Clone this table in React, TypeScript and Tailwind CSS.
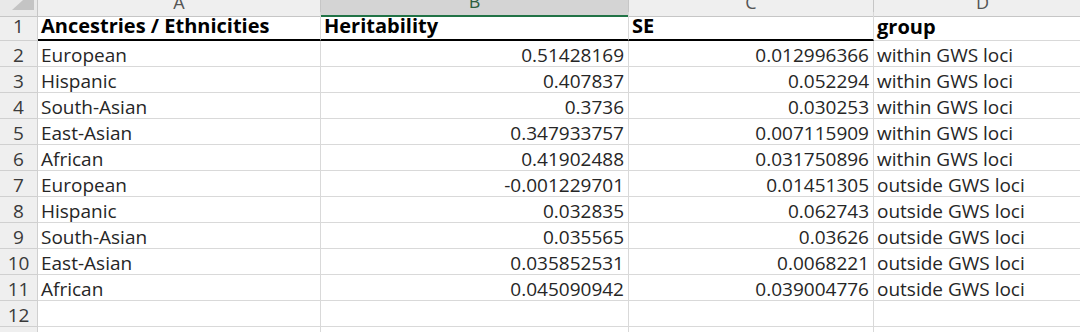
import React from "react"

const rows: [string, string, string, string][] = [
  ["European", "0.51428169", "0.012996366", "within GWS loci"],
  ["Hispanic", "0.407837", "0.052294", "within GWS loci"],
  ["South-Asian", "0.3736", "0.030253", "within GWS loci"],
  ["East-Asian", "0.347933757", "0.007115909", "within GWS loci"],
  ["African", "0.41902488", "0.031750896", "within GWS loci"],
  ["European", "-0.001229701", "0.01451305", "outside GWS loci"],
  ["Hispanic", "0.032835", "0.062743", "outside GWS loci"],
  ["South-Asian", "0.035565", "0.03626", "outside GWS loci"],
  ["East-Asian", "0.035852531", "0.0068221", "outside GWS loci"],
  ["African", "0.045090942", "0.039004776", "outside GWS loci"],
]

const grid = "grid grid-cols-[38px_283px_308px_245px_218px]"
const cell = "flex items-end leading-[21px] border-r border-b border-[#d9d9d9] whitespace-nowrap"
const rowHead = "flex items-end justify-center leading-[21px] bg-[#efefef] border-r border-b border-[#d0d0d0] text-[#3a3a3a]"
const headCell = "flex items-end leading-[27px] pl-[3px] border-r border-b border-[#d9d9d9] whitespace-nowrap"

export default function App() {
  return (
    <div className="w-[1080px] h-[332px] overflow-hidden bg-white text-[19px] text-[#262626] font-['Open_Sans',sans-serif]">
      <div className="-mt-[12px]">
        {/* column letters, top half cut off */}
        <div className={`${grid} h-[24px] text-[#555] text-[18px]`}>
          <div className="relative bg-[#e9e9e9] border-r border-b border-[#c6c6c6]">
            <svg className="absolute left-[12px] top-[2px]" width="22" height="20" viewBox="0 0 22 20">
              <polygon points="22,0 22,20 0,20" fill="#c4c4c4" />
            </svg>
          </div>
          <div className="flex items-center justify-center bg-[#efefef] border-r border-b border-[#c6c6c6]">A</div>
          <div className="flex items-center justify-center bg-[#d4d4d4] border-r border-[#c6c6c6] border-b-2 border-b-[#217346] text-[#2e5d3e]">B</div>
          <div className="flex items-center justify-center bg-[#efefef] border-r border-b border-[#c6c6c6]">C</div>
          <div className="flex items-center justify-center bg-[#efefef] border-r border-b border-[#c6c6c6]">D</div>
        </div>

        {/* header row */}
        <div className={`${grid} h-[29px] font-bold text-black text-[20px]`}>
          <div className="flex items-end justify-center leading-[27px] bg-[#efefef] border-r border-b border-[#d0d0d0] text-[#3a3a3a] font-normal text-[19px]">1</div>
          <div className={`${headCell} border-b-black border-b-2`}>Ancestries / Ethnicities</div>
          <div className={`${headCell} border-b-black border-b-2`}>Heritability</div>
          <div className={`${headCell} border-b-black border-b-2`}>SE</div>
          <div className={headCell}>group</div>
        </div>

        {rows.map((r, i) => (
          <div key={i} className={`${grid} h-[26px]`}>
            <div className={rowHead}>{i + 2}</div>
            <div className={`${cell} pl-[3px]`}>{r[0]}</div>
            <div className={`${cell} justify-end pr-[4px]`}>{r[1]}</div>
            <div className={`${cell} justify-end pr-[4px]`}>{r[2]}</div>
            <div className={`${cell} pl-[3px]`}>{r[3]}</div>
          </div>
        ))}

        {[12, 13].map(n => (
          <div key={n} className={`${grid} h-[26px]`}>
            <div className={rowHead}>{n}</div>
            <div className={cell}></div>
            <div className={cell}></div>
            <div className={cell}></div>
            <div className={cell}></div>
          </div>
        ))}
      </div>
    </div>
  )
}
